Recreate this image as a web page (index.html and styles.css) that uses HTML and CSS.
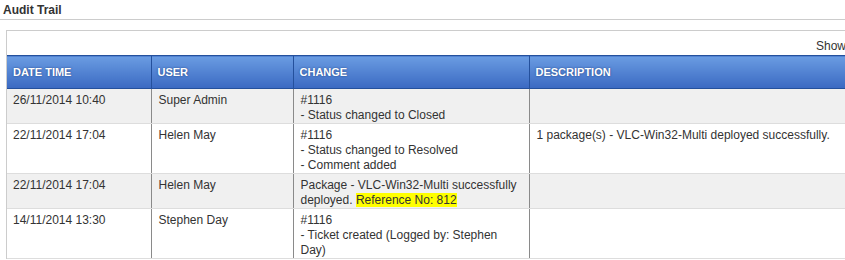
FILE: index.html
```html
<!DOCTYPE html>
<html lang="en">
<head>
  <meta charset="UTF-8">
  <meta name="viewport" content="width=device-width, initial-scale=1.0">
  <title>Audit Trail</title>
  <link rel="stylesheet" href="styles.css">
</head>
<body>
<div class="section">
  <h2 class="section-title">Audit Trail</h2>

  <div class="audit-box">
    <div class="table-toolbar">
      <label class="length-control">Show <span class="length-select">10</span> entries</label>
    </div>

    <table class="audit-table">
      <colgroup>
        <col class="col-date">
        <col class="col-user">
        <col class="col-change">
        <col class="col-desc">
      </colgroup>
      <thead>
        <tr>
          <th>Date Time</th>
          <th>User</th>
          <th>Change</th>
          <th>Description</th>
        </tr>
      </thead>
      <tbody>
        <tr class="odd">
          <td>26/11/2014 10:40</td>
          <td>Super Admin</td>
          <td>#1116<br>- Status changed to Closed</td>
          <td></td>
        </tr>
        <tr class="even">
          <td>22/11/2014 17:04</td>
          <td>Helen May</td>
          <td>#1116<br>- Status changed to Resolved<br>- Comment added</td>
          <td>1 package(s) - VLC-Win32-Multi deployed successfully.</td>
        </tr>
        <tr class="odd">
          <td>22/11/2014 17:04</td>
          <td>Helen May</td>
          <td>Package - VLC-Win32-Multi successfully deployed. <span class="ref-highlight">Reference No: 812</span></td>
          <td></td>
        </tr>
        <tr class="even">
          <td>14/11/2014 13:30</td>
          <td>Stephen Day</td>
          <td>#1116<br>- Ticket created (Logged by: Stephen Day)</td>
          <td></td>
        </tr>
      </tbody>
    </table>
  </div>
</div>
</body>
</html>
```

FILE: styles.css
```css
:root {
  --text-dark: #333333;
  --rule-light: #cccccc;
  --row-alt: #f0f0f0;
  --row-line: #dddddd;
  --cell-line: #8a8a8a;
  --head-top: #6a9ce2;
  --head-bottom: #3a69c2;
  --head-border: #24509c;
  --highlight: #ffff00;
}

* {
  box-sizing: border-box;
}

html, body {
  margin: 0;
  padding: 0;
  overflow: hidden;
}

body {
  font-family: "Liberation Sans", Arial, sans-serif;
  font-size: 12px;
  color: var(--text-dark);
  background: #ffffff;
  width: 845px;
}

.section-title {
  margin: 0;
  padding: 3px 0 0 3px;
  height: 20px;
  font-size: 12px;
  font-weight: bold;
  color: var(--text-dark);
  border-bottom: 1px solid var(--rule-light);
}

.audit-box {
  margin: 10px 0 0 6px;
  width: 960px;
  border-left: 1px solid var(--rule-light);
  border-top: 1px solid var(--rule-light);
}

.table-toolbar {
  height: 24px;
  padding: 7px 0 0 809px;
  line-height: 15px;
  white-space: nowrap;
}

.length-select {
  display: inline-block;
  padding: 0 14px 0 3px;
  border: 1px solid #aaaaaa;
}

.audit-table {
  width: 100%;
  border-collapse: collapse;
  table-layout: fixed;
}

.col-date { width: 144px; }
.col-user { width: 142px; }
.col-change { width: 236px; }

.audit-table th {
  height: 33px;
  padding: 0 6px;
  text-align: left;
  font-size: 11px;
  font-weight: bold;
  text-transform: uppercase;
  color: #ffffff;
  text-shadow: 0 0 2px rgba(20, 50, 110, 0.8);
  background: linear-gradient(to bottom, var(--head-top), var(--head-bottom));
  border: 1px solid var(--head-border);
}

.audit-table th:first-child {
  border-left: none;
}

.audit-table td {
  vertical-align: top;
  padding: 4px 6px 0 7px;
  line-height: 15px;
  border-left: 1px solid var(--cell-line);
  border-right: 1px solid var(--cell-line);
  border-bottom: 1px solid var(--row-line);
}

.audit-table td:first-child {
  border-left: none;
  padding-left: 6px;
}

.audit-table tr.odd td {
  background: var(--row-alt);
}

.ref-highlight {
  background: var(--highlight);
}
```
